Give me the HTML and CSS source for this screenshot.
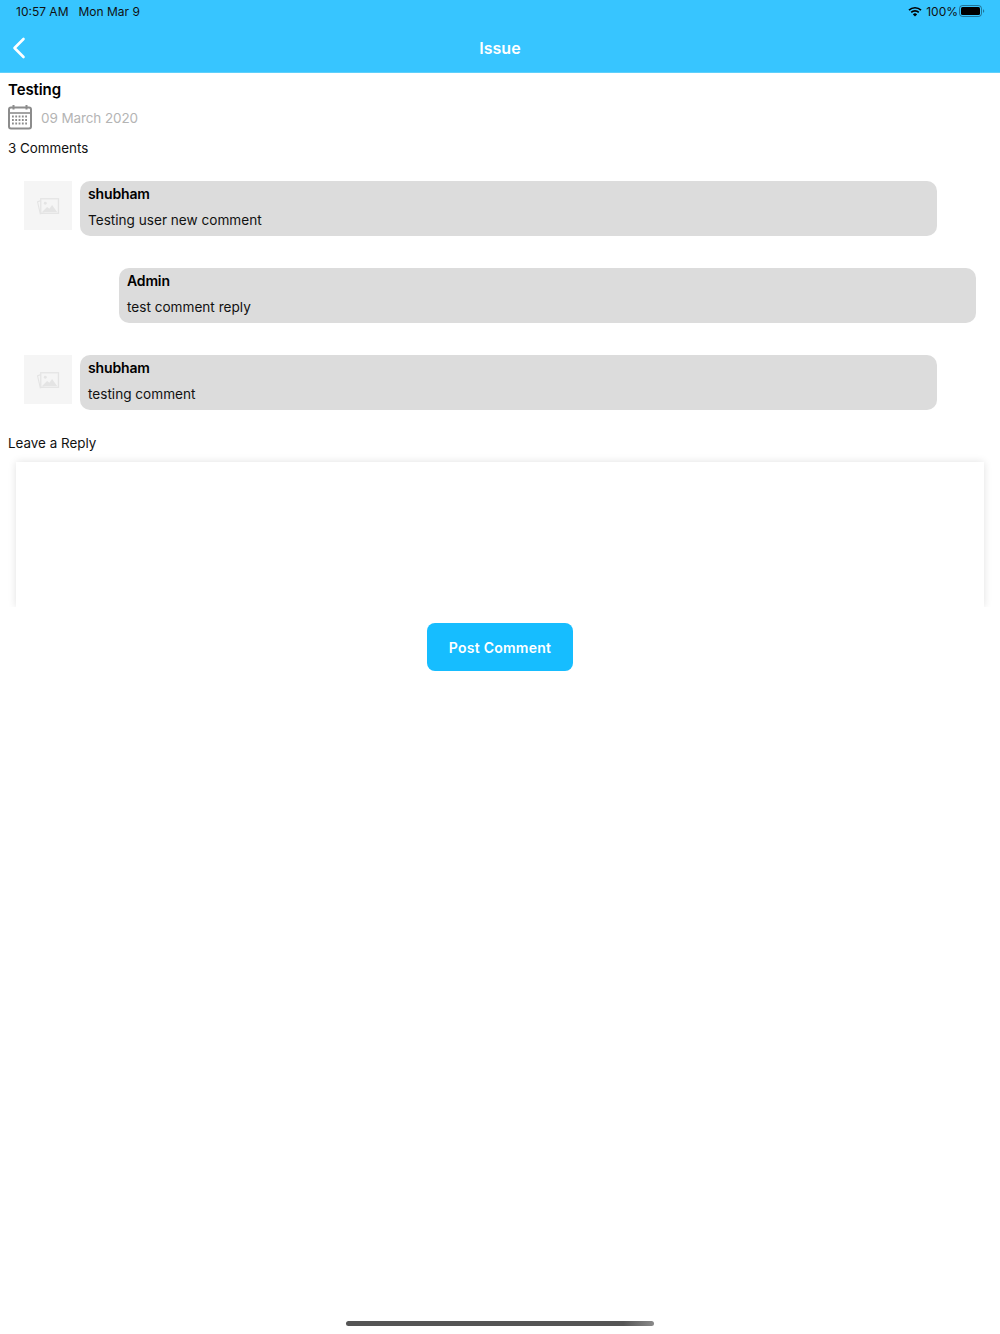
FILE: index.html
```html
<!DOCTYPE html>
<html lang="en">
<head>
    <meta charset="UTF-8">
    <meta name="viewport" content="width=device-width, initial-scale=1.0">
    <title>Issue</title>
    <link rel="stylesheet" href="styles.css">
</head>
<body>
    <header class="top">
        <div class="status-bar">
            <div class="status-left">
                <span>10:57 AM</span>
                <span>Mon Mar 9</span>
            </div>
            <div class="status-right">
                <svg class="wifi" width="14" height="11" viewBox="0 0 14 11">
                    <path d="M1 4.2a8.6 8.6 0 0 1 12 0" fill="none" stroke="#000" stroke-width="1.7"/>
                    <path d="M3.2 6.4a5.4 5.4 0 0 1 7.6 0" fill="none" stroke="#000" stroke-width="1.7"/>
                    <path d="M7 10.6 4.9 8.4a3 3 0 0 1 4.2 0z" fill="#000"/>
                </svg>
                <span>100%</span>
                <svg class="battery" width="26" height="12" viewBox="0 0 26 12">
                    <rect x="0.5" y="0.5" width="22" height="11" rx="3" fill="none" stroke="#000" stroke-opacity="0.4"/>
                    <rect x="2" y="2" width="19" height="8" rx="1.5" fill="#000"/>
                    <path d="M24 4.2c.8.2 1.2.9 1.2 1.8s-.4 1.6-1.2 1.8z" fill="#000" fill-opacity="0.4"/>
                </svg>
            </div>
        </div>
        <div class="nav-bar">
            <svg class="back" width="14" height="22" viewBox="0 0 14 22">
                <path d="M11.5 2 2.5 11l9 9" fill="none" stroke="#fff" stroke-width="2.6" stroke-linecap="round" stroke-linejoin="round"/>
            </svg>
            <h1>Issue</h1>
        </div>
    </header>

    <main class="issue">
        <h2 class="issue-title">Testing</h2>
        <div class="issue-date">
            <svg width="24" height="26" viewBox="0 0 24 26">
                <rect x="1" y="3.5" width="22" height="21" rx="2" fill="none" stroke="#8c8c8c" stroke-width="2"/>
                <path d="M1 9h22" stroke="#8c8c8c" stroke-width="1.6"/>
                <path d="M5.5 1v4.5M18.5 1v4.5" stroke="#8c8c8c" stroke-width="2"/>
                <path d="M4 12.5h16M4 16h16M4 19.5h16" stroke="#8c8c8c" stroke-width="1.8" stroke-dasharray="1.8 1.5"/>
            </svg>
            <span class="date-text">09 March 2020</span>
        </div>
        <p class="count">3 Comments</p>

        <div class="comments">
            <div class="comment">
                <div class="avatar">
                    <svg width="24" height="20" viewBox="0 0 26 22">
                        <path d="M5 5 1.5 6.5l3 13L9 18.5" fill="none" stroke="#e4e4e4" stroke-width="1.2"/>
                        <rect x="5" y="3" width="19.5" height="16" fill="none" stroke="#e4e4e4" stroke-width="1.4"/>
                        <circle cx="10" cy="8" r="1.6" fill="#e4e4e4"/>
                        <path d="M6.5 17.5 12 12l2.5 2 3-4 5.5 7.5z" fill="#e4e4e4"/>
                    </svg>
                </div>
                <div class="bubble">
                    <div class="author">shubham</div>
                    <div class="text">Testing user new comment</div>
                </div>
            </div>

            <div class="comment reply">
                <div class="bubble">
                    <div class="author">Admin</div>
                    <div class="text">test comment reply</div>
                </div>
            </div>

            <div class="comment">
                <div class="avatar">
                    <svg width="24" height="20" viewBox="0 0 26 22">
                        <path d="M5 5 1.5 6.5l3 13L9 18.5" fill="none" stroke="#e4e4e4" stroke-width="1.2"/>
                        <rect x="5" y="3" width="19.5" height="16" fill="none" stroke="#e4e4e4" stroke-width="1.4"/>
                        <circle cx="10" cy="8" r="1.6" fill="#e4e4e4"/>
                        <path d="M6.5 17.5 12 12l2.5 2 3-4 5.5 7.5z" fill="#e4e4e4"/>
                    </svg>
                </div>
                <div class="bubble">
                    <div class="author">shubham</div>
                    <div class="text">testing comment</div>
                </div>
            </div>
        </div>

        <p class="reply-label">Leave a Reply</p>
        <div class="reply-box"></div>
        <button class="post">Post Comment</button>
    </main>

    <div class="home-bar"></div>
</body>
</html>
```

FILE: styles.css
```css
* {
    box-sizing: border-box;
}
body {
    font-family: Inter, "Liberation Sans", sans-serif;
    background-color: white;
    color: #111;
    margin: 0;
    height: 1334px;
    overflow: hidden;
    position: relative;
}
.top {
    height: 73px;
    background-color: #37c5ff;
    border-bottom: 1px solid #5fd0fb;
}
.status-bar {
    height: 24px;
    padding: 0 15px 2px 16px;
    display: flex;
    justify-content: space-between;
    align-items: center;
    font-size: 12px;
}
.status-left {
    display: flex;
    gap: 10px;
}
.status-right {
    display: flex;
    align-items: center;
    gap: 1px;
}
.wifi {
    margin-right: 3px;
}
.nav-bar {
    height: 48px;
    display: flex;
    align-items: center;
    justify-content: center;
    position: relative;
}
.nav-bar h1 {
    margin: 0;
    font-size: 16px;
    font-weight: 600;
    color: white;
}
.back {
    position: absolute;
    left: 12px;
    top: 13px;
}
.issue {
    padding: 0 8px;
    display: flex;
    flex-direction: column;
}
.issue-title {
    margin: 8px 0 0;
    height: 18px;
    line-height: 18px;
    font-size: 15px;
    font-weight: 600;
    letter-spacing: -0.1px;
    color: #000;
}
.issue-date {
    margin-top: 5px;
    height: 26px;
    display: flex;
    align-items: center;
    gap: 9px;
    font-size: 13.5px;
    letter-spacing: -0.1px;
    color: #b4b4b4;
}
.date-text {
    margin-top: 2px;
}
.count {
    margin: 9px 0 0;
    height: 18px;
    line-height: 18px;
    font-size: 13.4px;
}
.comments {
    margin-top: 24px;
    display: flex;
    flex-direction: column;
    gap: 32px;
}
.comment {
    display: flex;
    gap: 8px;
    padding-left: 16px;
    padding-right: 55px;
}
.comment.reply {
    padding-left: 111px;
    padding-right: 16px;
}
.avatar {
    width: 48px;
    height: 49px;
    flex-shrink: 0;
    background-color: #f5f5f5;
    display: flex;
    align-items: center;
    justify-content: center;
}
.bubble {
    flex: 1;
    height: 55px;
    padding: 4px 8px 0;
    background-color: #dcdcdc;
    border-radius: 10px;
    font-size: 14px;
}
.author {
    height: 18px;
    line-height: 18px;
    font-weight: 600;
    letter-spacing: -0.15px;
    color: #000;
}
.text {
    margin-top: 8px;
    height: 18px;
    line-height: 18px;
    font-size: 13.6px;
}
.reply-label {
    margin: 24px 0 0;
    height: 18px;
    line-height: 18px;
    font-size: 13.4px;
}
.reply-box {
    margin: 10px 8px 0;
    height: 145px;
    background-color: white;
    box-shadow: 0 0 8px rgba(0, 0, 0, 0.12);
    clip-path: inset(-8px -8px 0 -8px);
}
.post {
    align-self: center;
    margin-top: 16px;
    width: 146px;
    height: 48px;
    background-color: #16bdff;
    color: white;
    border: none;
    border-radius: 8px;
    font-family: inherit;
    font-size: 14px;
    font-weight: 600;
    letter-spacing: 0.25px;
}
.home-bar {
    position: absolute;
    left: 346px;
    top: 1321px;
    width: 308px;
    height: 5px;
    border-radius: 3px;
    background: linear-gradient(to right, #555 0%, #555 90%, #8a8a8a 100%);
}
```
